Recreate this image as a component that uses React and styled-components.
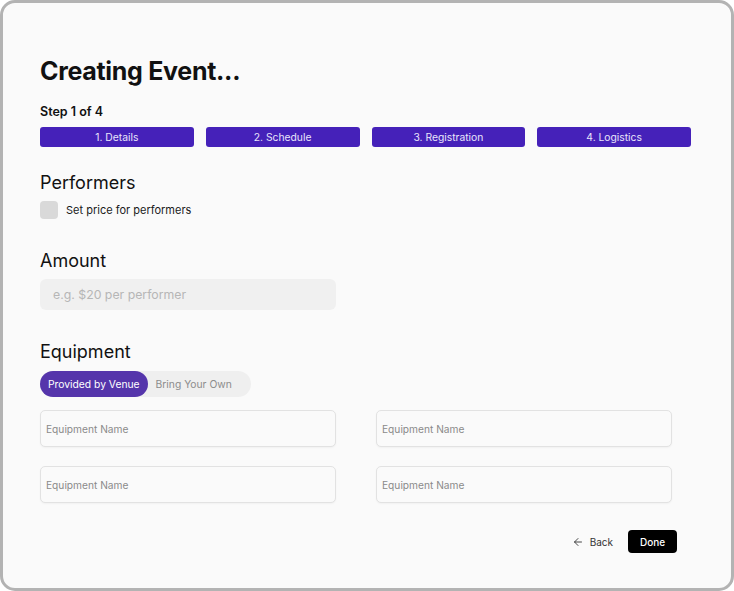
import React, { useState } from 'react'
import styled, { createGlobalStyle } from 'styled-components'
import { ArrowLeft } from 'lucide-react'

const GlobalStyle = createGlobalStyle`
  html, body {
    margin: 0;
    padding: 0;
    background: #ffffff;
    font-family: 'Inter', 'Liberation Sans', sans-serif;
  }
  * {
    box-sizing: border-box;
  }
`

const Frame = styled.div`
  width: 734px;
  height: 591px;
  border: 3px solid #b3b3b3;
  border-radius: 15px;
  background: #fafafa;
  padding: 52px 40px 0 37px;
  display: flex;
  flex-direction: column;
  color: #111;
`

const Title = styled.h1`
  margin: 0;
  font-size: 25px;
  line-height: 32px;
  font-weight: 700;
  letter-spacing: -0.3px;
`

const StepLabel = styled.div`
  margin-top: 17px;
  font-size: 12.5px;
  line-height: 16px;
  font-weight: 600;
`

const Steps = styled.div`
  margin-top: 7px;
  display: grid;
  grid-template-columns: repeat(4, 1fr);
  gap: 12px;
`

const StepButton = styled.button`
  height: 20px;
  border: none;
  border-radius: 3px;
  background: #4521b9;
  color: #e9e5fb;
  font-family: inherit;
  font-size: 10.3px;
  padding: 0;
  cursor: pointer;
`

const SectionTitle = styled.h2`
  margin: ${(p) => p.$top}px 0 0;
  font-size: 18px;
  line-height: 23px;
  font-weight: 400;
`

const CheckRow = styled.label`
  margin-top: 7px;
  display: flex;
  align-items: center;
  gap: 8px;
  font-size: 11px;
  color: #1a1a1a;
`

const CheckBox = styled.span`
  width: 18px;
  height: 18px;
  border-radius: 4px;
  background: #d9d9d9;
`

const AmountInput = styled.input`
  margin-top: 7px;
  width: 296px;
  height: 31px;
  border: none;
  border-radius: 6px;
  background: #f0f0f0;
  padding: 0 13px;
  font-family: inherit;
  font-size: 12.3px;
  outline: none;
  &::placeholder {
    color: #b6b6b6;
  }
`

const Toggle = styled.div`
  margin-top: 8px;
  align-self: flex-start;
  display: flex;
  width: 211px;
  height: 26px;
  border-radius: 13px;
  background: #efefef;
`

const ToggleOption = styled.button`
  flex-shrink: 0;
  white-space: nowrap;
  border: none;
  border-radius: 13px;
  padding: 0 8px;
  height: 26px;
  font-family: inherit;
  font-size: 10.3px;
  background: ${(p) => (p.$active ? '#5535ab' : 'transparent')};
  color: ${(p) => (p.$active ? '#ffffff' : '#8c8c8c')};
  cursor: pointer;
`

const EquipGrid = styled.div`
  margin-top: 13px;
  display: grid;
  grid-template-columns: 296px 296px;
  column-gap: 40px;
  row-gap: 19px;
`

const EquipInput = styled.input`
  height: 37px;
  border: 1px solid #e2e2e2;
  border-radius: 5px;
  background: #fafafa;
  box-shadow: 0 1px 2px rgba(0, 0, 0, 0.04);
  padding: 0 5px;
  font-family: inherit;
  font-size: 10.2px;
  outline: none;
  &::placeholder {
    color: #8a8a8a;
  }
`

const Footer = styled.div`
  margin-top: 27px;
  padding-right: 14px;
  display: flex;
  justify-content: flex-end;
  align-items: center;
  gap: 15px;
`

const BackButton = styled.button`
  display: flex;
  align-items: center;
  gap: 6px;
  border: none;
  background: none;
  padding: 0;
  font-family: inherit;
  font-size: 10px;
  color: #333;
  cursor: pointer;
`

const DoneButton = styled.button`
  width: 49px;
  height: 23px;
  border: none;
  border-radius: 4px;
  background: #000;
  color: #fff;
  font-family: inherit;
  font-size: 10px;
  font-weight: 500;
  cursor: pointer;
`

const steps = ['1. Details', '2. Schedule', '3. Registration', '4. Logistics']

export default function App() {
  const [source, setSource] = useState('venue')

  return (
    <>
      <GlobalStyle />
      <Frame>
        <Title>Creating Event...</Title>
        <StepLabel>Step 1 of 4</StepLabel>
        <Steps>
          {steps.map((s) => (
            <StepButton key={s}>{s}</StepButton>
          ))}
        </Steps>

        <SectionTitle $top={24}>Performers</SectionTitle>
        <CheckRow>
          <CheckBox />
          Set price for performers
        </CheckRow>

        <SectionTitle $top={30}>Amount</SectionTitle>
        <AmountInput placeholder="e.g. $20 per performer" />

        <SectionTitle $top={30}>Equipment</SectionTitle>
        <Toggle>
          <ToggleOption $active={source === 'venue'} onClick={() => setSource('venue')}>
            Provided by Venue
          </ToggleOption>
          <ToggleOption $active={source === 'own'} onClick={() => setSource('own')}>
            Bring Your Own
          </ToggleOption>
        </Toggle>
        <EquipGrid>
          <EquipInput placeholder="Equipment Name" />
          <EquipInput placeholder="Equipment Name" />
          <EquipInput placeholder="Equipment Name" />
          <EquipInput placeholder="Equipment Name" />
        </EquipGrid>

        <Footer>
          <BackButton>
            <ArrowLeft size={12} strokeWidth={1.8} />
            Back
          </BackButton>
          <DoneButton>Done</DoneButton>
        </Footer>
      </Frame>
    </>
  )
}
